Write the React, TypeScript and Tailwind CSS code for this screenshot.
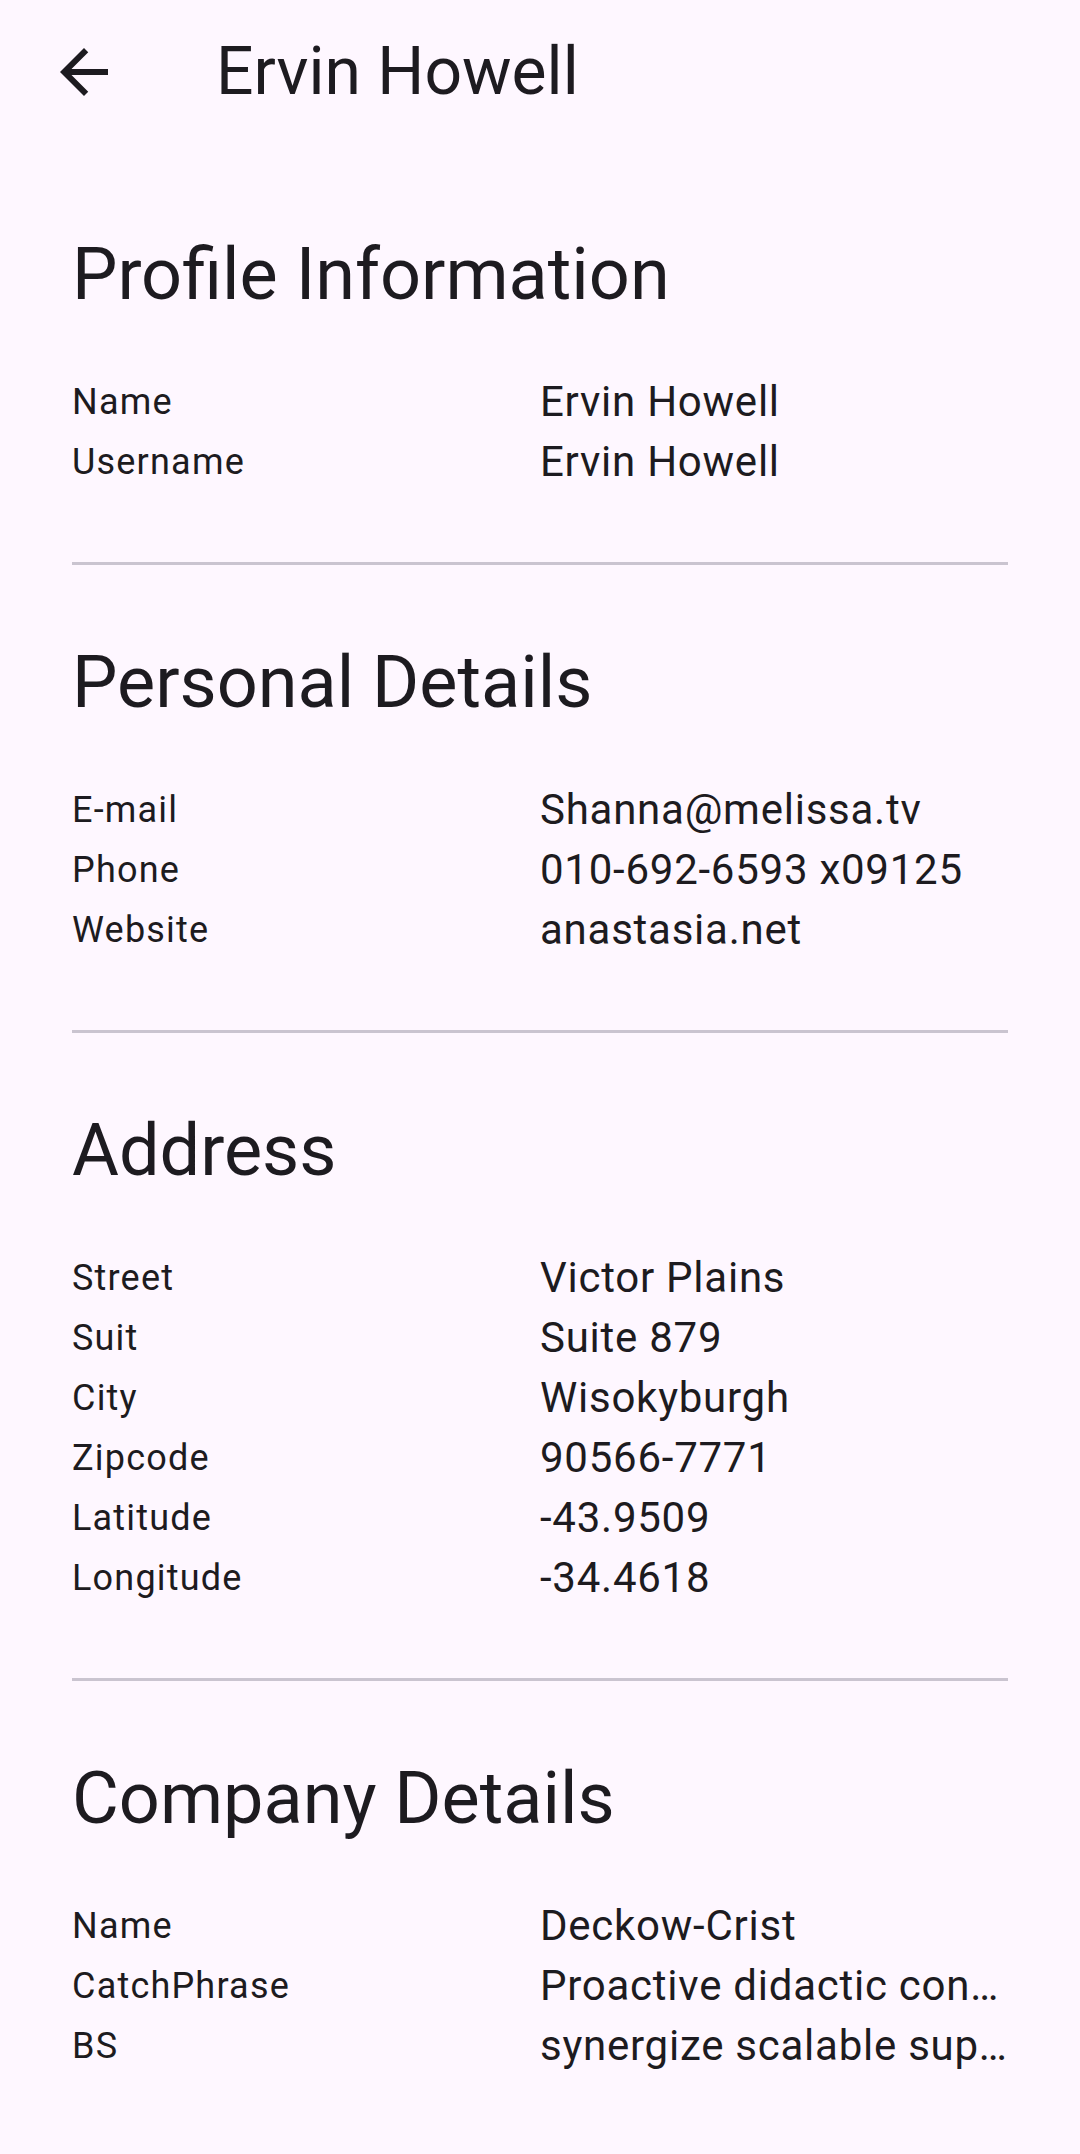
import React from 'react';

type Row = { label: string; value: string };
type Section = { title: string; rows: Row[] };

const SECTIONS: Section[] = [
  {
    title: 'Profile Information',
    rows: [
      { label: 'Name', value: 'Ervin Howell' },
      { label: 'Username', value: 'Ervin Howell' },
    ],
  },
  {
    title: 'Personal Details',
    rows: [
      { label: 'E-mail', value: 'Shanna@melissa.tv' },
      { label: 'Phone', value: '010-692-6593 x09125' },
      { label: 'Website', value: 'anastasia.net' },
    ],
  },
  {
    title: 'Address',
    rows: [
      { label: 'Street', value: 'Victor Plains' },
      { label: 'Suit', value: 'Suite 879' },
      { label: 'City', value: 'Wisokyburgh' },
      { label: 'Zipcode', value: '90566-7771' },
      { label: 'Latitude', value: '-43.9509' },
      { label: 'Longitude', value: '-34.4618' },
    ],
  },
  {
    title: 'Company Details',
    rows: [
      { label: 'Name', value: 'Deckow-Crist' },
      { label: 'CatchPhrase', value: 'Proactive didactic contingency' },
      { label: 'BS', value: 'synergize scalable supply-chains' },
    ],
  },
];

const BackIcon = () => (
  <svg viewBox="0 0 24 24" className="w-[72px] h-[72px]" fill="#1d1b20">
    <path d="M20 11H7.83l5.59-5.59L12 4l-8 8 8 8 1.41-1.41L7.83 13H20v-2z" />
  </svg>
);

const InfoRow = ({ label, value }: Row) => (
  <div className="flex items-center h-[60px]">
    <div className="flex-1 min-w-0 text-[36px] leading-[48px] tracking-[1.2px] truncate">
      {label}
    </div>
    <div className="flex-1 min-w-0 text-[42px] leading-[60px] tracking-[0.75px] truncate">
      {value}
    </div>
  </div>
);

export default function App() {
  return (
    <div className="min-h-[2154px] w-full bg-[#fef7ff] text-[#1d1b20] font-['Roboto',sans-serif]">
      <header className="flex items-center h-[144px]">
        <div className="w-[168px] flex justify-center">
          <BackIcon />
        </div>
        <h1 className="ml-[48px] text-[66px] leading-[84px]">Ervin Howell</h1>
      </header>

      <main className="px-[72px] pt-[83px]">
        {SECTIONS.map((section, i) => (
          <section key={section.title}>
            <h2 className="text-[72px] leading-[96px]">{section.title}</h2>
            <div className="mt-[49px]">
              {section.rows.map((row) => (
                <InfoRow key={row.label} label={row.label} value={row.value} />
              ))}
            </div>
            {i < SECTIONS.length - 1 && (
              <div className="my-[70px] h-[3px] bg-[#cac4d0]" />
            )}
          </section>
        ))}
      </main>
    </div>
  );
}
